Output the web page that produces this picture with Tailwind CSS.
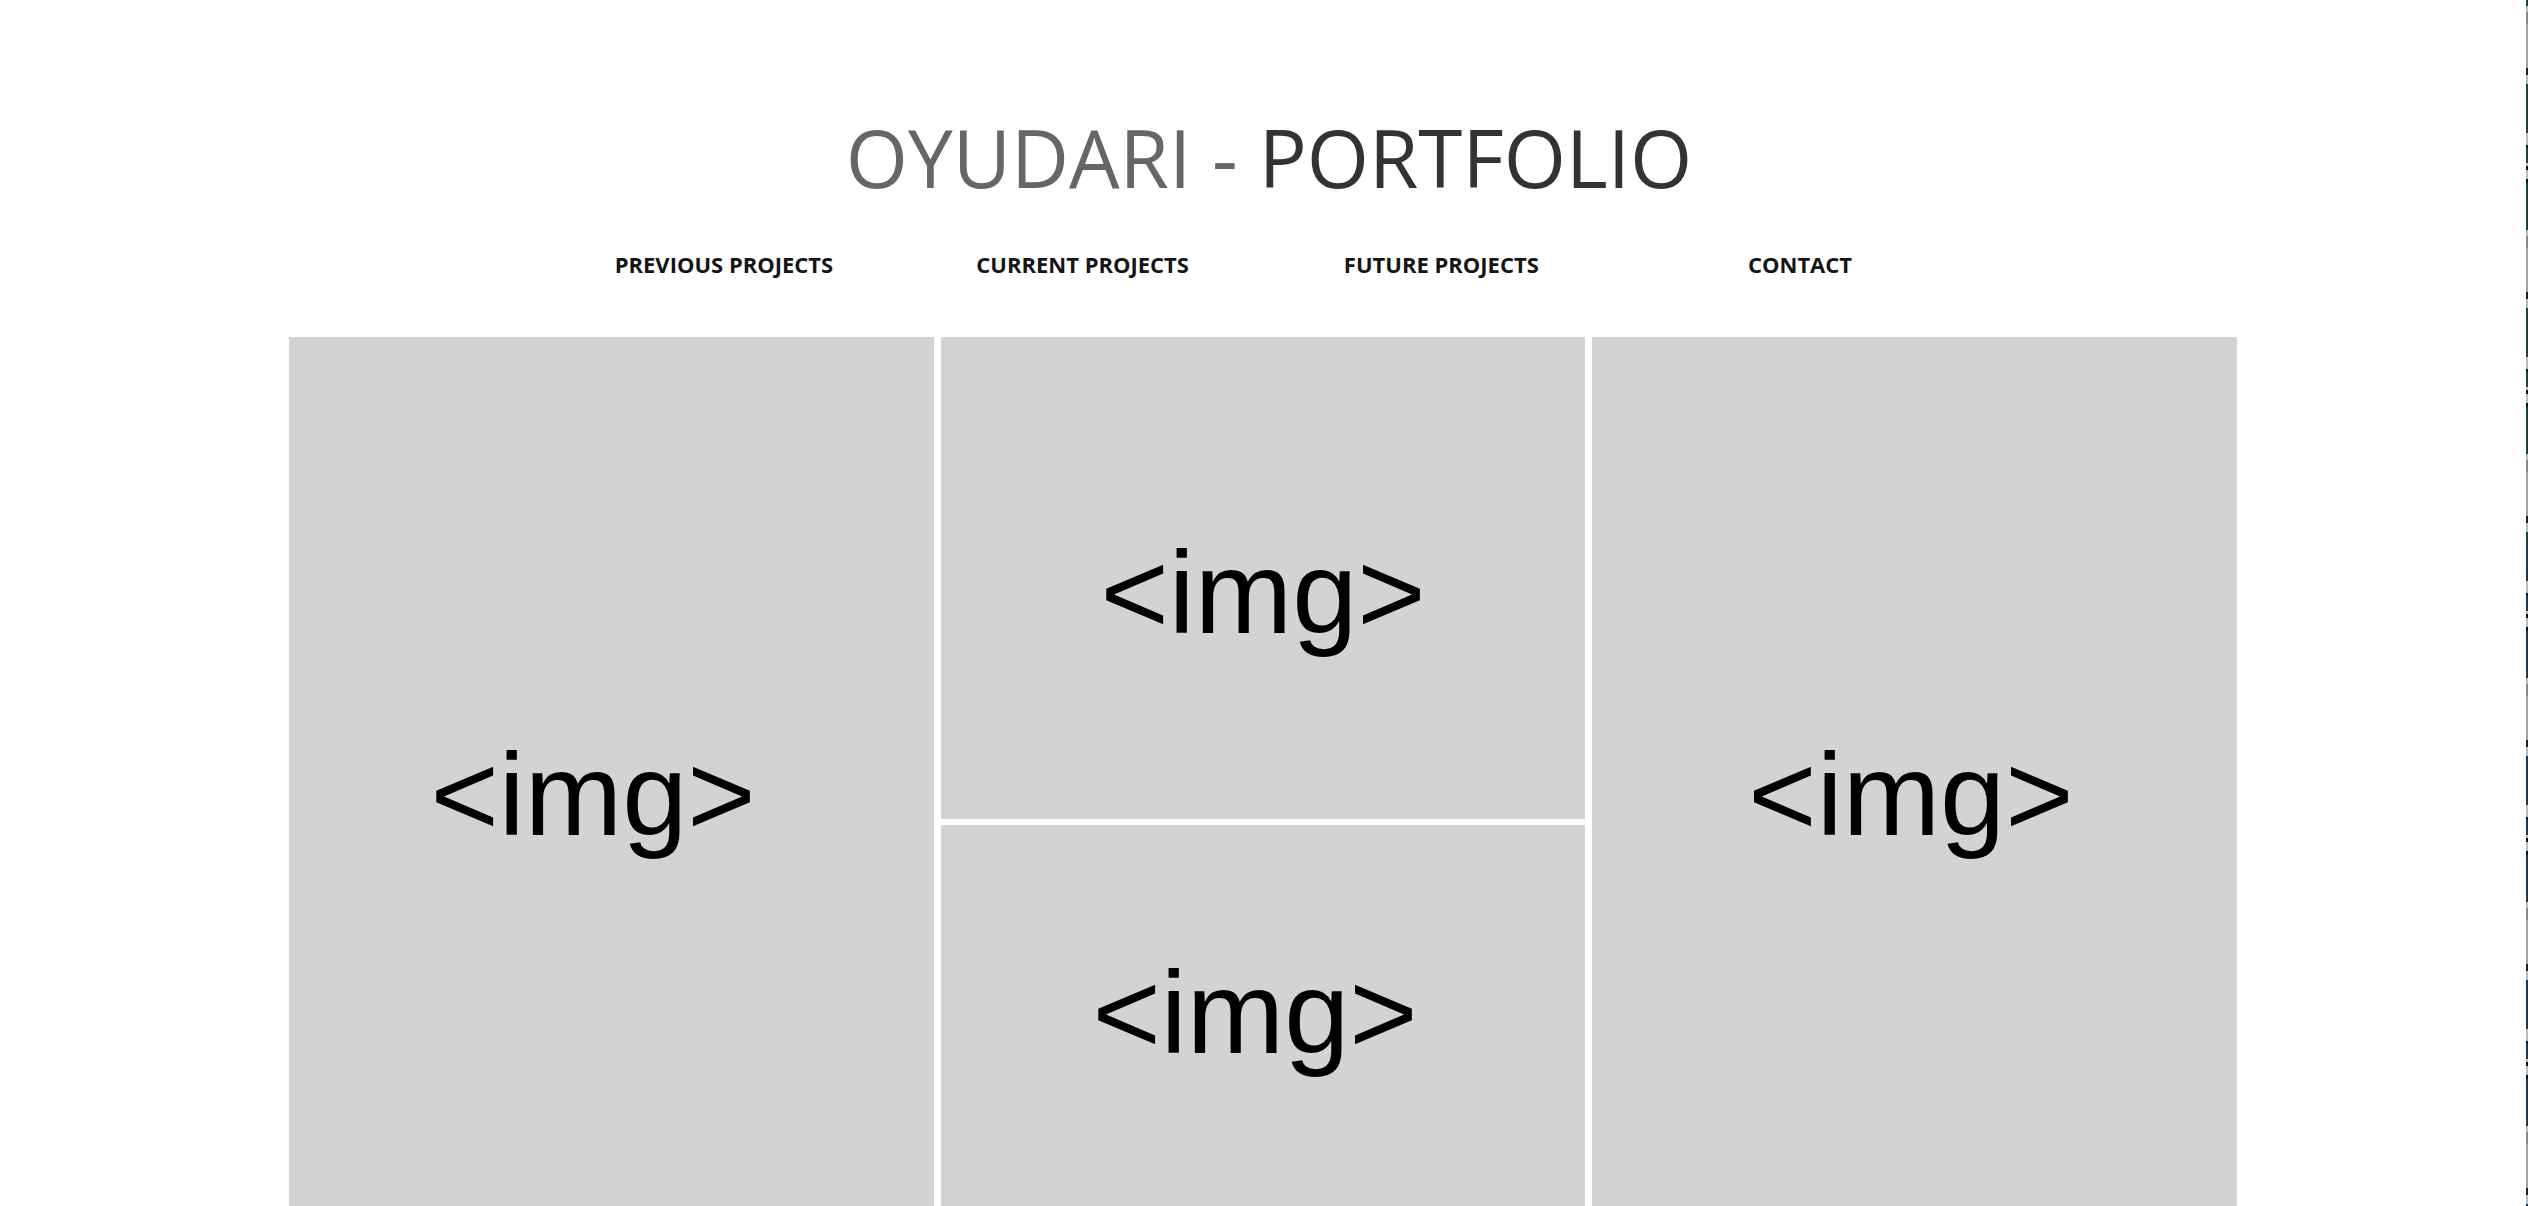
<!DOCTYPE html>
<html lang="en">
<head>
<meta charset="utf-8">
<title>Oyudari - Portfolio</title>
<script src="https://cdn.jsdelivr.net/npm/@tailwindcss/browser@4"></script>
</head>
<body class="flex min-h-screen bg-white font-['Open_Sans',sans-serif]">
<div class="flex flex-1 flex-col">
  <header class="flex flex-col items-center pt-[101px]">
    <h1 class="pl-3 text-[80px] leading-[112px] text-[#666]">OYUDARI - <span class="text-[#333]">PORTFOLIO</span></h1>
    <nav class="mr-[2px] grid w-[56.8%] grid-cols-4 pt-9 pb-[58px] text-center text-[22px] leading-[30px] font-bold text-[#151515]">
      <a href="#previous">PREVIOUS PROJECTS</a>
      <a href="#current">CURRENT PROJECTS</a>
      <a href="#future">FUTURE PROJECTS</a>
      <a href="#contact">CONTACT</a>
    </nav>
  </header>
  <main class="mx-auto grid w-[77.15%] flex-1 grid-cols-3 gap-[7px] font-['Liberation_Sans',sans-serif] text-[117px] leading-[132px] text-black">
    <div class="flex justify-center bg-[#d3d3d3] pt-[392px] pr-9">&lt;img&gt;</div>
    <div class="flex flex-col gap-[6px]">
      <div class="flex h-[482px] justify-center bg-[#d4d2d3] pt-[190px]">&lt;img&gt;</div>
      <div class="flex flex-1 justify-center bg-[#d4d2d3] pt-[122px] pr-4">&lt;img&gt;</div>
    </div>
    <div class="flex justify-center bg-[#d4d2d3] pt-[392px] pr-2">&lt;img&gt;</div>
  </main>
</div>
<!-- Patterned edge: a repeating mask of grey bands over a green-to-blue strip -->
<div class="w-[2px] bg-linear-to-b from-[#16463a] from-40% to-[#173a55] to-50%">
  <div class="h-full bg-[repeating-linear-gradient(to_bottom,transparent_0_6px,#bbb_6px_12px,#888_12px_24px,#a3a3a3_24px_68px,#222_68px_75px,#bbb_75px_84px,transparent_84px_133px,#bbb_133px_145px,#111_145px_148px,transparent_148px_163px,#bbb_163px_166px,#111_166px_170px,#bbb_170px_179px,#111_179px_183px,transparent_183px_224px)]"></div>
</div>
</body>
</html>
